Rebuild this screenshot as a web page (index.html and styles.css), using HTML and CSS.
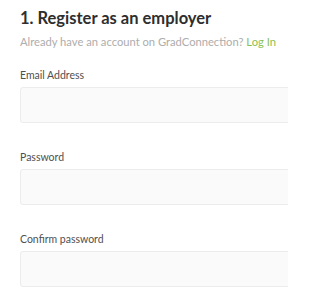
FILE: index.html
```html
<!DOCTYPE html>
<html lang="en">
<head>
<meta charset="utf-8">
<title>Register as an employer</title>
<link rel="stylesheet" href="styles.css">
</head>
<body>
<main class="page">
  <h1 class="title">1. Register as an employer</h1>
  <p class="subtitle">Already have an account on GradConnection? <a class="login" href="#">Log In</a></p>
  <form class="form">
    <div class="field">
      <label class="label" for="email">Email Address</label>
      <input class="input" id="email" type="email">
    </div>
    <div class="field">
      <label class="label" for="pw">Password</label>
      <input class="input" id="pw" type="password">
    </div>
    <div class="field">
      <label class="label" for="pw2">Confirm password</label>
      <input class="input" id="pw2" type="password">
    </div>
  </form>
</main>
</body>
</html>
```

FILE: styles.css
```css
html, body {
  margin: 0;
  padding: 0;
  width: 288px;
  height: 288px;
  background: #ffffff;
  overflow: hidden;
}
body {
  font-family: Lato, "Liberation Sans", sans-serif;
}
.page {
  box-sizing: border-box;
  width: 288px;
  height: 288px;
  padding: 8px 0 0 20px;
  overflow: hidden;
}
.title {
  margin: 0;
  font-size: 16.5px;
  line-height: 20px;
  font-weight: 700;
  color: #2e2e2e;
  white-space: nowrap;
}
.subtitle {
  margin: 6px 0 0;
  font-size: 11.2px;
  line-height: 16px;
  color: #adadad;
  white-space: nowrap;
}
.login {
  color: #8cc152;
  text-decoration: none;
}
.form {
  margin-top: 17px;
}
.field {
  display: flex;
  flex-direction: column;
  margin-bottom: 26px;
}
.label {
  font-size: 10.5px;
  line-height: 16px;
  color: #4f4f4f;
  margin-bottom: 4px;
}
.input {
  box-sizing: border-box;
  width: calc(100% + 20px);
  height: 36px;
  margin: 0;
  border: 1px solid #ececec;
  border-radius: 3px;
  background: #fafafa;
  outline: none;
}
```
